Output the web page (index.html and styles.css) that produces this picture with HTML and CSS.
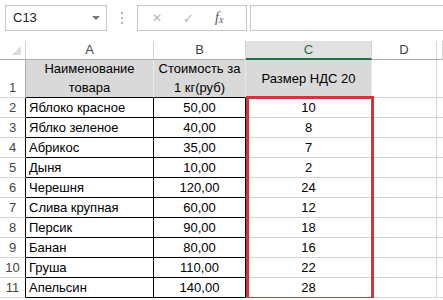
FILE: index.html
```html
<!DOCTYPE html>
<html lang="ru">
<head>
    <meta charset="UTF-8">
    <meta name="viewport" content="width=device-width, initial-scale=1.0">
    <title>НДС</title>
    <link rel="stylesheet" href="styles.css">
</head>
<body>
    <div class="formula-bar">
        <div class="name-box">
            <span>C13</span>
            <span class="name-arrow"></span>
        </div>
        <div class="grip"><i></i><i></i><i></i></div>
        <div class="fx-buttons">
            <span class="fx-cancel">&#x2715;</span>
            <span class="fx-enter">&#x2713;</span>
            <span class="fx-label">f<sub>x</sub></span>
        </div>
        <div class="formula-input"></div>
    </div>

    <div class="sheet-wrap">
        <div class="sheet">
            <!-- column headers -->
            <div class="hdr corner"><span class="corner-tri"></span></div>
            <div class="hdr col">A</div>
            <div class="hdr col">B</div>
            <div class="hdr col active">C</div>
            <div class="hdr col">D</div>
            <div class="hdr col"></div>

            <!-- row 1: titles -->
            <div class="hdr row bottom">1</div>
            <div class="cell title wrap">Наименование товара</div>
            <div class="cell title wrap">Стоимость за 1 кг(руб)</div>
            <div class="cell title mid">Размер НДС 20</div>
            <div class="cell"></div>
            <div class="cell"></div>

            <div class="hdr row">2</div><div class="cell data">Яблоко красное</div><div class="cell data num">50,00</div><div class="cell num">10</div><div class="cell"></div><div class="cell"></div>
            <div class="hdr row">3</div><div class="cell data">Яблко зеленое</div><div class="cell data num">40,00</div><div class="cell num">8</div><div class="cell"></div><div class="cell"></div>
            <div class="hdr row">4</div><div class="cell data">Абрикос</div><div class="cell data num">35,00</div><div class="cell num">7</div><div class="cell"></div><div class="cell"></div>
            <div class="hdr row">5</div><div class="cell data">Дыня</div><div class="cell data num">10,00</div><div class="cell num">2</div><div class="cell"></div><div class="cell"></div>
            <div class="hdr row">6</div><div class="cell data">Черешня</div><div class="cell data num">120,00</div><div class="cell num">24</div><div class="cell"></div><div class="cell"></div>
            <div class="hdr row">7</div><div class="cell data">Слива крупная</div><div class="cell data num">60,00</div><div class="cell num">12</div><div class="cell"></div><div class="cell"></div>
            <div class="hdr row">8</div><div class="cell data">Персик</div><div class="cell data num">90,00</div><div class="cell num">18</div><div class="cell"></div><div class="cell"></div>
            <div class="hdr row">9</div><div class="cell data">Банан</div><div class="cell data num">80,00</div><div class="cell num">16</div><div class="cell"></div><div class="cell"></div>
            <div class="hdr row">10</div><div class="cell data">Груша</div><div class="cell data num">110,00</div><div class="cell num">22</div><div class="cell"></div><div class="cell"></div>
            <div class="hdr row">11</div><div class="cell data">Апельсин</div><div class="cell data num">140,00</div><div class="cell num">28</div><div class="cell"></div><div class="cell"></div>
        </div>
        <!-- thick red frame round C2:C11 -->
        <div class="range-frame"></div>
    </div>
</body>
</html>
```

FILE: styles.css
```css
* {
    box-sizing: border-box;
}
body {
    margin: 0;
    background: #fff;
    font-family: "Liberation Sans", Arial, sans-serif;
    color: #000;
    overflow: hidden;
}

/* formula bar */
.formula-bar {
    display: flex;
    align-items: flex-start;
    height: 41px;
    padding: 5px 0 0 5px;
}
.name-box {
    position: relative;
    width: 102px;
    height: 26px;
    border: 1px solid #c6c6c6;
    padding: 0 0 0 7px;
    font-size: 13px;
    line-height: 24px;
    color: #222;
}
.name-arrow {
    position: absolute;
    right: 6px;
    top: 10px;
    border-left: 4px solid transparent;
    border-right: 4px solid transparent;
    border-top: 4px solid #777;
}
.grip {
    display: flex;
    flex-direction: column;
    gap: 3px;
    width: 30px;
    padding: 7px 0 0 14px;
}
.grip i {
    width: 2px;
    height: 2px;
    background: #b4b4b4;
}
.fx-buttons {
    display: flex;
    align-items: center;
    width: 110px;
    height: 26px;
    border: 1px solid #c6c6c6;
    font-size: 13px;
}
.fx-cancel {
    margin-left: 14px;
    color: #b8b8b8;
    font-size: 12px;
}
.fx-enter {
    margin-left: 21px;
    color: #b8b8b8;
    font-size: 13px;
}
.fx-label {
    margin-left: 21px;
    font-family: "Liberation Serif", serif;
    font-style: italic;
    font-size: 14px;
    color: #555;
}
.fx-label sub {
    font-size: 10px;
    vertical-align: -1px;
}
.formula-input {
    flex: 1;
    height: 26px;
    margin-left: 3px;
    border: 1px solid #c6c6c6;
    border-right: none;
}

/* worksheet grid */
.sheet-wrap {
    position: relative;
}
.sheet {
    display: grid;
    grid-template-columns: 26px 128px 92px 126px 65px 6px;
    grid-template-rows: 19px 38px repeat(10, 20px);
    font-size: 13px;
}
.hdr {
    background: #fff;
    color: #444;
    border-right: 1px solid #d4d4d4;
    border-bottom: 1px solid #d4d4d4;
    text-align: center;
}
.hdr.col {
    line-height: 18px;
    border-bottom-color: #ababab;
}
.hdr.col.active {
    background: #e1e1e1;
    color: #217346;
    border-bottom: 2px solid #217346;
}
.corner {
    position: relative;
    border-bottom-color: #ababab;
}
.corner-tri {
    position: absolute;
    right: 4px;
    bottom: 4px;
    border-left: 9px solid transparent;
    border-bottom: 9px solid #dcdcdc;
}
.hdr.row {
    line-height: 19px;
    border-right-color: #000;
}
.hdr.row.bottom {
    display: flex;
    align-items: flex-end;
    justify-content: center;
    padding-bottom: 0;
    border-right-color: #ababab;
}
.cell {
    border-right: 1px solid #d4d4d4;
    border-bottom: 1px solid #d4d4d4;
    padding: 0 3px;
    line-height: 19px;
    white-space: nowrap;
    overflow: hidden;
}
.cell.title {
    background: #d9d9d9;
    border-right-color: #e8e8e8;
    border-bottom-color: #000;
    text-align: center;
}
.cell.wrap {
    display: flex;
    align-items: flex-end;
    justify-content: center;
    white-space: normal;
    line-height: 19px;
}
.cell.mid {
    line-height: 37px;
    border-bottom-color: #d4d4d4;
}
.cell.data {
    border-right-color: #000;
    border-bottom-color: #000;
}
.cell.num {
    text-align: center;
}

.range-frame {
    position: absolute;
    left: 246px;
    top: 55px;
    width: 128px;
    height: 204px;
    border: 3px solid #d0343f;
}
```
